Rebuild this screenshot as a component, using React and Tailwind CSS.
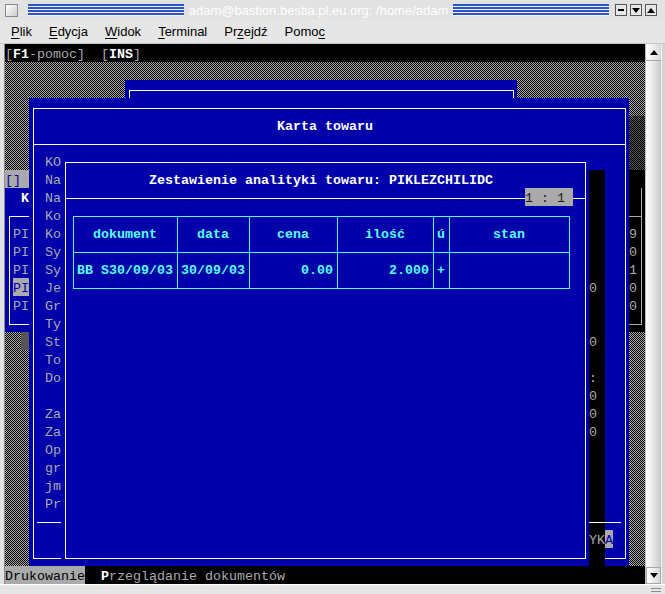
import React from 'react'

const LEFT_LABELS = ['KO', 'Na', 'Na', 'Ko', 'Ko', 'Sy', 'Sy', 'Je', 'Gr', 'Ty', 'St', 'To', 'Do', '', 'Za', 'Za', 'Op', 'gr', 'jm', 'Pr']

// text left visible in the shadow column of the inner dialog (rows 7..28)
const SHADOW_TEXT = { 13: '0', 16: '0', 18: ':', 19: '0', 20: '0', 21: '0' }

function TitleBar() {
  return (
    <div className="h-[20px] flex items-center pl-[5px] pr-[8px] bg-[#e2e2e2]">
      <div className="w-[13px] h-[13px] border border-[#8a8a8a] bg-gradient-to-br from-white to-[#cdcdcd]" />
      <div className="flex-1 h-[12px] ml-[10px] bg-[image:repeating-linear-gradient(to_bottom,#2c54c6_0_2px,#f4f6ff_2px_3px)]" />
      <span className="px-[5px] text-[13px] leading-none text-white">adam@bastion.bestia.pl.eu.org: /home/adam</span>
      <div className="flex-1 h-[12px] bg-[image:repeating-linear-gradient(to_bottom,#2c54c6_0_2px,#f4f6ff_2px_3px)]" />
      <div className="flex gap-[3px] ml-[6px]">
        <div className="w-[12px] h-[12px] border border-[#555] bg-[#e8e8e8] flex items-center justify-center">
          <div className="w-[6px] h-[2px] bg-black" />
        </div>
        <div className="w-[12px] h-[12px] border border-[#555] bg-[#e8e8e8] flex items-center justify-center">
          <svg width="8" height="5" viewBox="0 0 8 5"><path d="M0 0 L8 0 L4 5 Z" fill="#000" /></svg>
        </div>
        <div className="w-[12px] h-[12px] border border-[#555] bg-[#e8e8e8] flex items-center justify-center">
          <svg width="8" height="5" viewBox="0 0 8 5"><path d="M0 5 L4 0 L8 5 Z" fill="#000" /></svg>
        </div>
      </div>
    </div>
  )
}

function MenuBar() {
  return (
    <div className="h-[24px] flex items-center pl-[11px] gap-[17px] text-[13px] text-black bg-[#e6e6e6] border-b border-[#c4c4c4]">
      <span><u className="underline-offset-2">P</u>lik</span>
      <span><u className="underline-offset-2">E</u>dycja</span>
      <span><u className="underline-offset-2">W</u>idok</span>
      <span><u className="underline-offset-2">T</u>erminal</span>
      <span>Pr<u className="underline-offset-2">z</u>ejdź</span>
      <span>Pomo<u className="underline-offset-2">c</u></span>
    </div>
  )
}

function Scrollbar() {
  return (
    <div className="w-[16px] flex flex-col bg-[#e8e8e8] border-l border-[#bdbdbd]">
      <div className="h-[17px] flex items-center justify-center border-b border-[#a8a8a8] bg-gradient-to-r from-white to-[#d8d8d8]">
        <svg width="8" height="5" viewBox="0 0 8 5"><path d="M0 5 L4 0 L8 5 Z" fill="#000" /></svg>
      </div>
      <div className="flex-1 bg-gradient-to-r from-white via-[#e6e6e6] to-[#c8c8c8]" />
      <div className="h-[17px] flex items-center justify-center border border-[#a8a8a8] bg-gradient-to-r from-white to-[#d8d8d8]">
        <svg width="8" height="5" viewBox="0 0 8 5"><path d="M0 0 L8 0 L4 5 Z" fill="#000" /></svg>
      </div>
    </div>
  )
}

function Terminal() {
  const shadowRows = []
  for (let r = 7; r <= 28; r++) shadowRows.push(r)

  return (
    <div className="grid grid-cols-[repeat(80,8px)] grid-rows-[repeat(30,18px)] w-[640px] h-[540px] bg-black text-[#aaaaaa] font-['Liberation_Mono','Courier_New',monospace] text-[13.333px] leading-[21px] whitespace-pre overflow-hidden">
      {/* top help line */}
      <div className="col-start-1 col-end-81 row-start-1 bg-black">[<b className="text-white">F1</b>-pomoc]  [<b className="text-white">INS</b>]</div>

      {/* shaded desktop: 1px checkerboard from two striped layers */}
      <div className="col-start-1 col-end-81 row-start-2 row-end-30 bg-[image:repeating-linear-gradient(90deg,#aaaaaa_0_1px,#000000_1px_2px),repeating-linear-gradient(180deg,#000000_0_1px,#aaaaaa_1px_2px)] bg-blend-difference" />
      <div className="col-start-79 col-end-81 row-start-5 row-end-8 bg-[image:repeating-linear-gradient(90deg,#555555_0_1px,#000000_1px_2px),repeating-linear-gradient(180deg,#000000_0_1px,#555555_1px_2px)] bg-blend-difference" />

      {/* back window */}
      <div className="col-start-16 col-end-65 row-start-3 row-end-6 flex bg-[#0000aa]">
        <div className="flex-1 mt-[10px] ml-[4px] mr-[3px] border-t border-x border-white" />
      </div>

      {/* left list window */}
      <div className="col-start-1 col-end-4 row-start-8 bg-[#aaaaaa] text-[#0000aa]">[]</div>
      <div className="col-start-1 col-end-4 row-start-9 row-end-17 bg-[#0000aa]" />
      <div className="col-start-1 col-end-4 row-start-10 row-end-17 flex">
        <div className="flex-1 mt-[10px] ml-[4px] mb-[7px] border-t border-l border-b border-white" />
      </div>
      <b className="col-start-3 row-start-9 text-white">K</b>
      <div className="col-start-2 col-end-4 row-start-11">PI</div>
      <div className="col-start-2 col-end-4 row-start-12">PI</div>
      <div className="col-start-2 col-end-4 row-start-13">PI</div>
      <div className="col-start-2 col-end-4 row-start-14 bg-[#aaaaaa] text-[#0000aa]">PI</div>
      <div className="col-start-2 col-end-4 row-start-15">PI</div>
      <div className="col-start-3 col-end-4 row-start-17 bg-[#555555]" />

      {/* right window, under shadow */}
      <div className="col-start-79 col-end-81 row-start-8 row-end-17 bg-black" />
      <div className="col-start-80 row-start-9 row-end-17 w-px ml-[4px] mb-[7px] bg-[#aaaaaa]" />
      <div className="col-start-79 col-end-81 row-start-10 self-start h-px mt-[10px] mr-[3px] bg-[#aaaaaa]" />
      <div className="col-start-79 col-end-81 row-start-16 self-start h-px mt-[10px] mr-[3px] bg-[#aaaaaa]" />
      <div className="col-start-79 row-start-11 row-end-16 flex flex-col">
        <div className="h-[18px]">9</div>
        <div className="h-[18px]">0</div>
        <div className="h-[18px]">1</div>
        <div className="h-[18px]">0</div>
        <div className="h-[18px]">0</div>
      </div>

      {/* Karta towaru */}
      <div className="col-start-4 col-end-79 row-start-4 row-end-30 flex bg-[#0000aa]">
        <div className="flex-1 mt-[10px] ml-[4px] mr-[3px] mb-[7px] border border-white" />
      </div>
      <b className="col-start-35 row-start-5 text-white">Karta towaru</b>
      <div className="col-start-4 col-end-79 row-start-6 self-start h-px mt-[10px] ml-[4px] mr-[3px] bg-white" />
      <div className="col-start-6 col-end-8 row-start-7 row-end-27 flex flex-col">
        {LEFT_LABELS.map((t, i) => (
          <div key={i} className="h-[18px]">{t}</div>
        ))}
      </div>

      {/* shadow of the inner dialog */}
      <div className="col-start-74 col-end-76 row-start-8 row-end-30 bg-black" />
      <div className="col-start-5 col-end-78 row-start-27 self-start h-px mt-[10px] bg-white" />
      <div className="col-start-74 col-end-77 row-start-8 row-end-30 flex flex-col">
        {shadowRows.map(r => (
          <div key={r} className="h-[18px]">
            {r === 27 ? (
              <>YK<span className="inline-block h-[18px] bg-[#aaaaaa] text-[#0000aa]">A</span></>
            ) : (
              SHADOW_TEXT[r] || ''
            )}
          </div>
        ))}
      </div>

      {/* Zestawienie analityki towaru */}
      <div className="col-start-8 col-end-74 row-start-7 row-end-30 flex bg-[#0000aa]">
        <div className="flex-1 mt-[10px] ml-[4px] mr-[3px] mb-[7px] border border-white" />
      </div>
      <b className="col-start-19 row-start-8 text-white">Zestawienie analityki towaru: PIKLEZCHILIDC</b>
      <div className="col-start-8 col-end-74 row-start-9 self-start h-px mt-[10px] ml-[4px] mr-[3px] bg-white" />
      <div className="col-start-66 col-end-72 row-start-9 bg-[#aaaaaa] text-[#1c1c1c]">1 : 1</div>

      {/* table */}
      <div className="col-start-9 col-end-72 row-start-10 row-end-15 flex">
        <div className="flex-1 mt-[10px] ml-[4px] mr-[3px] mb-[7px] border border-[#55ffff]" />
      </div>
      <div className="col-start-22 row-start-10 row-end-15 w-px mt-[10px] mb-[7px] ml-[4px] bg-[#55ffff]" />
      <div className="col-start-31 row-start-10 row-end-15 w-px mt-[10px] mb-[7px] ml-[4px] bg-[#55ffff]" />
      <div className="col-start-42 row-start-10 row-end-15 w-px mt-[10px] mb-[7px] ml-[4px] bg-[#55ffff]" />
      <div className="col-start-54 row-start-10 row-end-15 w-px mt-[10px] mb-[7px] ml-[4px] bg-[#55ffff]" />
      <div className="col-start-56 row-start-10 row-end-15 w-px mt-[10px] mb-[7px] ml-[4px] bg-[#55ffff]" />
      <div className="col-start-9 col-end-72 row-start-12 self-start h-px mt-[10px] ml-[4px] mr-[3px] bg-[#55ffff]" />

      <b className="col-start-12 row-start-11 text-[#55ffff]">dokument</b>
      <b className="col-start-25 row-start-11 text-[#55ffff]">data</b>
      <b className="col-start-35 row-start-11 text-[#55ffff]">cena</b>
      <b className="col-start-46 row-start-11 text-[#55ffff]">ilość</b>
      <b className="col-start-55 row-start-11 text-[#55ffff]">ú</b>
      <b className="col-start-62 row-start-11 text-[#55ffff]">stan</b>

      <b className="col-start-10 row-start-13 text-[#55ffff]">BB S30/09/03</b>
      <b className="col-start-23 row-start-13 text-[#55ffff]">30/09/03</b>
      <b className="col-start-38 row-start-13 text-[#55ffff]">0.00</b>
      <b className="col-start-49 row-start-13 text-[#55ffff]">2.000</b>
      <b className="col-start-55 row-start-13 text-[#55ffff]">+</b>

      {/* bottom status line */}
      <div className="col-start-1 col-end-81 row-start-30 bg-black"><span className="inline-block h-[18px] bg-[#aaaaaa] text-black">Drukowanie</span>  <b className="text-white">P</b>rzeglądanie dokumentów</div>
    </div>
  )
}

export default function App() {
  return (
    <div className="w-[665px] h-[594px] flex flex-col overflow-hidden bg-[#e2e2e2] font-['Liberation_Sans',Arial,sans-serif]">
      <TitleBar />
      <MenuBar />
      <div className="flex h-[540px]">
        <div className="w-[5px] bg-[#e2e2e2] border-r border-[#8c8c8c]" />
        <Terminal />
        <Scrollbar />
        <div className="w-[4px] bg-[#d4d4d4] border-l border-[#f2f2f2]" />
      </div>
      <div className="flex-1 flex bg-[#e6e6e6] border-t border-white">
        <div className="flex-1" />
        <div className="w-[16px] flex flex-col justify-end pb-[2px] gap-[2px] items-end pr-[4px]">
          <div className="w-[10px] h-px bg-[#8c8c8c]" />
          <div className="w-[10px] h-px bg-[#8c8c8c]" />
        </div>
      </div>
    </div>
  )
}
